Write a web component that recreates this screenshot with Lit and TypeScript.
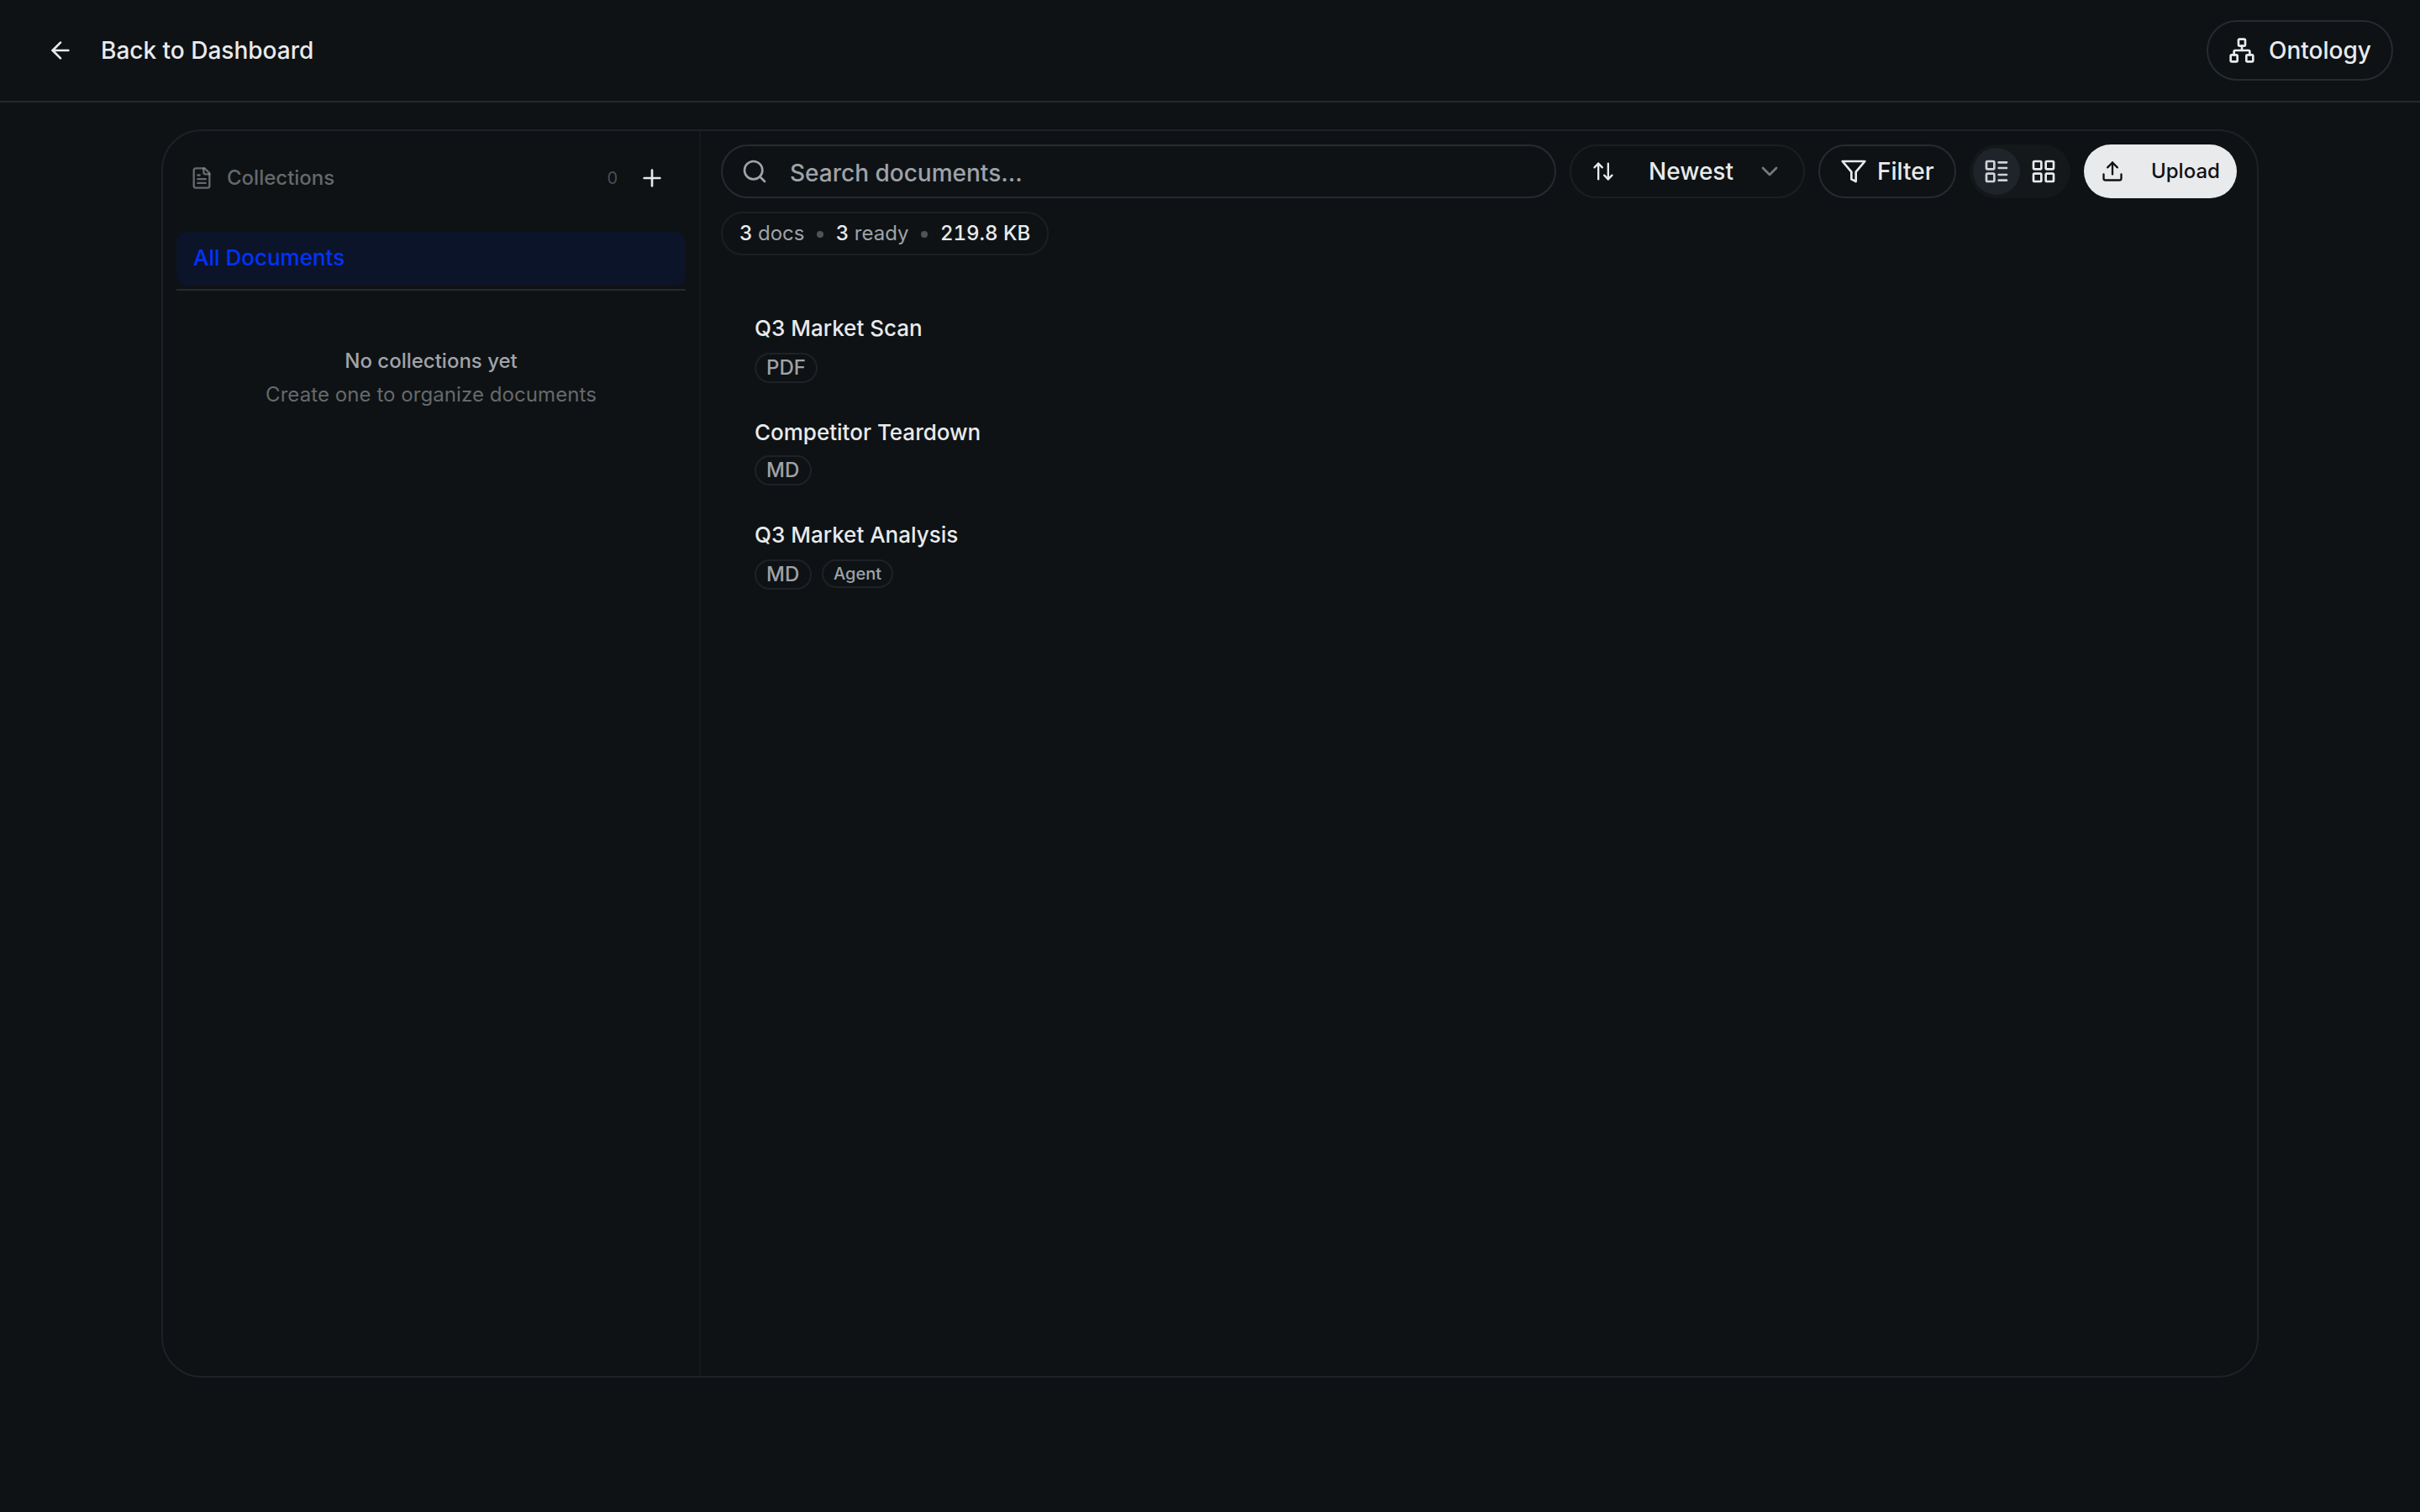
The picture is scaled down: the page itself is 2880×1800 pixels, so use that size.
import { LitElement, html, css, svg, nothing } from "lit";
import { customElement, property } from "lit/decorators.js";

const ICONS: Record<string, unknown> = {
  back: svg`<path d="m12 19-7-7 7-7"/><path d="M19 12H5"/>`,
  network: svg`<rect x="16" y="16" width="6" height="6" rx="1"/><rect x="2" y="16" width="6" height="6" rx="1"/><rect x="9" y="2" width="6" height="6" rx="1"/><path d="M5 16v-3a1 1 0 0 1 1-1h12a1 1 0 0 1 1 1v3"/><path d="M12 12V8"/>`,
  file: svg`<path d="M15 2H6a2 2 0 0 0-2 2v16a2 2 0 0 0 2 2h12a2 2 0 0 0 2-2V7Z"/><path d="M14 2v4a2 2 0 0 0 2 2h4"/><path d="M10 9H8"/><path d="M16 13H8"/><path d="M16 17H8"/>`,
  plus: svg`<path d="M5 12h14"/><path d="M12 5v14"/>`,
  search: svg`<circle cx="11" cy="11" r="8"/><path d="m21 21-4.3-4.3"/>`,
  sort: svg`<path d="m21 16-4 4-4-4"/><path d="M17 20V4"/><path d="m3 8 4-4 4 4"/><path d="M7 4v16"/>`,
  chevron: svg`<path d="m6 9 6 6 6-6"/>`,
  filter: svg`<polygon points="22 3 2 3 10 12.46 10 19 14 21 14 12.46 22 3"/>`,
  list: svg`<rect x="3" y="3" width="7" height="7" rx="1"/><rect x="3" y="14" width="7" height="7" rx="1"/><path d="M14 4h7"/><path d="M14 9h7"/><path d="M14 15h7"/><path d="M14 20h7"/>`,
  grid: svg`<rect x="3" y="3" width="7" height="7" rx="1"/><rect x="14" y="3" width="7" height="7" rx="1"/><rect x="14" y="14" width="7" height="7" rx="1"/><rect x="3" y="14" width="7" height="7" rx="1"/>`,
  upload: svg`<path d="M12 3v12"/><path d="m17 8-5-5-5 5"/><path d="M21 15v4a2 2 0 0 1-2 2H5a2 2 0 0 1-2-2v-4"/>`,
};

@customElement("ui-icon")
class UiIcon extends LitElement {
  @property() name = "";
  static styles = css`
    :host { display: block; width: 32px; height: 32px; flex: none; }
    .glyph { display: block; width: 100%; height: 100%; }
  `;
  render() {
    return html`<svg class="glyph" viewBox="0 0 24 24" fill="none" stroke="currentColor" stroke-width="2" stroke-linecap="round" stroke-linejoin="round">${ICONS[this.name]}</svg>`;
  }
}

interface Doc { title: string; type: string; agent?: boolean }
const DOCS: Doc[] = [
  { title: "Q3 Market Scan", type: "PDF" },
  { title: "Competitor Teardown", type: "MD" },
  { title: "Q3 Market Analysis", type: "MD", agent: true },
];

@customElement("app-root")
class AppRoot extends LitElement {
  static styles = css`
    :host {
      display: block;
      height: 1800px;
      box-sizing: border-box;
      background: #0e1214;
      color: #e9eaec;
      font-family: Inter, sans-serif;
      font-size: 28px;
      line-height: 40px;
      overflow: hidden;
    }
    * { box-sizing: border-box; }
    .header {
      display: flex; align-items: center; justify-content: space-between;
      height: 122px; padding: 0 32px 0 56px;
      border-bottom: 2px solid #242a30;
    }
    .back { display: flex; align-items: center; gap: 32px; font-weight: 500; }
    .ontology {
      display: flex; align-items: center; gap: 16px; font-weight: 500;
      width: 222px; height: 72px; padding-left: 24px;
      border: 2px solid #262b33; border-radius: 36px;
    }
    .panel {
      display: flex; width: 2496px; height: 1486px; margin: 32px auto 0;
      border: 2px solid #1e2228; border-radius: 48px; overflow: hidden;
    }
    .sidebar {
      width: 640px; flex: none; padding: 0 16px; border-right: 2px solid #16191d;
    }
    .side-head {
      display: flex; align-items: center; height: 112px; padding: 0 24px 0 16px;
      font-size: 24px; font-weight: 500; color: rgba(161, 164, 168, 0.6);
    }
    .side-head .file { width: 28px; height: 28px; margin-right: 16px; }
    .count { margin-left: auto; margin-right: 25px; font-size: 20px; font-weight: 400; color: #4b4e51; }
    .add { color: #e9eaec; }
    .all {
      height: 64px; margin-top: 8px; padding: 0 20px; border-radius: 12px;
      background: #0c142a; color: #0033ff; font-size: 26px; font-weight: 500; line-height: 62px;
    }
    .rule { height: 2px; margin-top: 4px; background: #242a30; }
    .empty { padding-top: 64px; text-align: center; font-size: 24px; line-height: 40px; }
    .empty-title { font-weight: 500; color: #a1a4aa; }
    .empty-hint { color: #66696c; letter-spacing: 0.07px; }
    .main { flex: 1; padding: 16px 24px; }
    .toolbar { display: flex; gap: 16px; height: 64px; }
    .search {
      display: flex; align-items: center; gap: 26px; flex: 1; padding-left: 22px;
      border: 2px solid #262b33; border-radius: 32px; color: #9fa2a9;
    }
    .search .label { padding-top: 4px; font-weight: 500; }
    .sort {
      display: flex; align-items: center; width: 280px; padding: 0 24px;
      border: 2px solid #1b1f22; border-radius: 32px; font-weight: 500;
    }
    .sort .arrows { width: 28px; height: 28px; }
    .sort .label { margin-left: 40px; }
    .sort .chev { margin-left: auto; color: #777a7d; }
    .filter {
      display: flex; align-items: center; gap: 12px; width: 164px; padding-left: 24px;
      border: 2px solid #262b33; border-radius: 32px; font-weight: 500;
    }
    .views { display: flex; width: 120px; padding: 4px; border-radius: 32px; background: #14181a; }
    .view { display: flex; align-items: center; justify-content: center; width: 56px; height: 56px; border-radius: 28px; }
    .view.on { background: #1f232a; color: #d0d2d6; }
    .upload {
      display: flex; align-items: center; width: 182px; padding-left: 20px; gap: 32px;
      border-radius: 32px; background: #e9eaec; color: #0e1214;
      font-size: 24px; font-weight: 500;
    }
    .upload .up { width: 28px; height: 28px; }
    .stats {
      display: flex; align-items: center; width: 390px; height: 52px; margin-top: 16px; padding: 0 20px;
      border: 2px solid #1b1f22; border-radius: 26px; font-size: 24px; color: #9fa2a9; white-space: nowrap;
      font-variant-numeric: tabular-nums;
    }
    .num { color: #e9eaec; font-weight: 500; }
    .dot { width: 8px; height: 8px; flex: none; border-radius: 4px; margin: 2px 14.7px 0; background: #505356; }
    .docs { padding: 67px 40px 0; }
    .doc { height: 123px; }
    .title { font-size: 26px; font-weight: 500; line-height: 40px; }
    .tags { display: flex; gap: 12px; margin-top: 9px; }
    .doc:nth-child(2) .title { padding-top: 1px; }
    .doc:nth-child(2) .tags { margin-top: 7px; }
    .tag {
      height: 36px; min-width: 68px; padding: 0 12px; border: 2px solid #1e2228; border-radius: 18px;
      font-size: 24px; line-height: 31px; color: #9fa2a9; font-weight: 500;
    }
    .tag.agent { height: 34px; font-size: 20px; line-height: 30px; }
  `;

  render() {
    return html`
      <header class="header">
        <div class="back"><ui-icon name="back"></ui-icon><span>Back to Dashboard</span></div>
        <div class="ontology"><ui-icon name="network"></ui-icon><span>Ontology</span></div>
      </header>
      <div class="panel">
        <aside class="sidebar">
          <div class="side-head">
            <ui-icon class="file" name="file"></ui-icon><span>Collections</span>
            <span class="count">0</span>
            <ui-icon class="add" name="plus"></ui-icon>
          </div>
          <div class="all">All Documents</div>
          <div class="rule"></div>
          <div class="empty">
            <div class="empty-title">No collections yet</div>
            <div class="empty-hint">Create one to organize documents</div>
          </div>
        </aside>
        <main class="main">
          <div class="toolbar">
            <div class="search"><ui-icon name="search"></ui-icon><span class="label">Search documents...</span></div>
            <div class="sort">
              <ui-icon class="arrows" name="sort"></ui-icon><span class="label">Newest</span>
              <ui-icon class="chev" name="chevron"></ui-icon>
            </div>
            <div class="filter"><ui-icon name="filter"></ui-icon><span>Filter</span></div>
            <div class="views">
              <div class="view on"><ui-icon name="list"></ui-icon></div>
              <div class="view"><ui-icon name="grid"></ui-icon></div>
            </div>
            <div class="upload"><ui-icon class="up" name="upload"></ui-icon><span>Upload</span></div>
          </div>
          <div class="stats">
            <span><span class="num">3</span> docs</span><i class="dot"></i>
            <span><span class="num">3</span> ready</span><i class="dot"></i>
            <span class="num">219.8 KB</span>
          </div>
          <div class="docs">
            ${DOCS.map((d) => html`
              <div class="doc">
                <div class="title">${d.title}</div>
                <div class="tags">
                  <span class="tag">${d.type}</span>
                  ${d.agent ? html`<span class="tag agent">Agent</span>` : nothing}
                </div>
              </div>`)}
          </div>
        </main>
      </div>
    `;
  }
}
